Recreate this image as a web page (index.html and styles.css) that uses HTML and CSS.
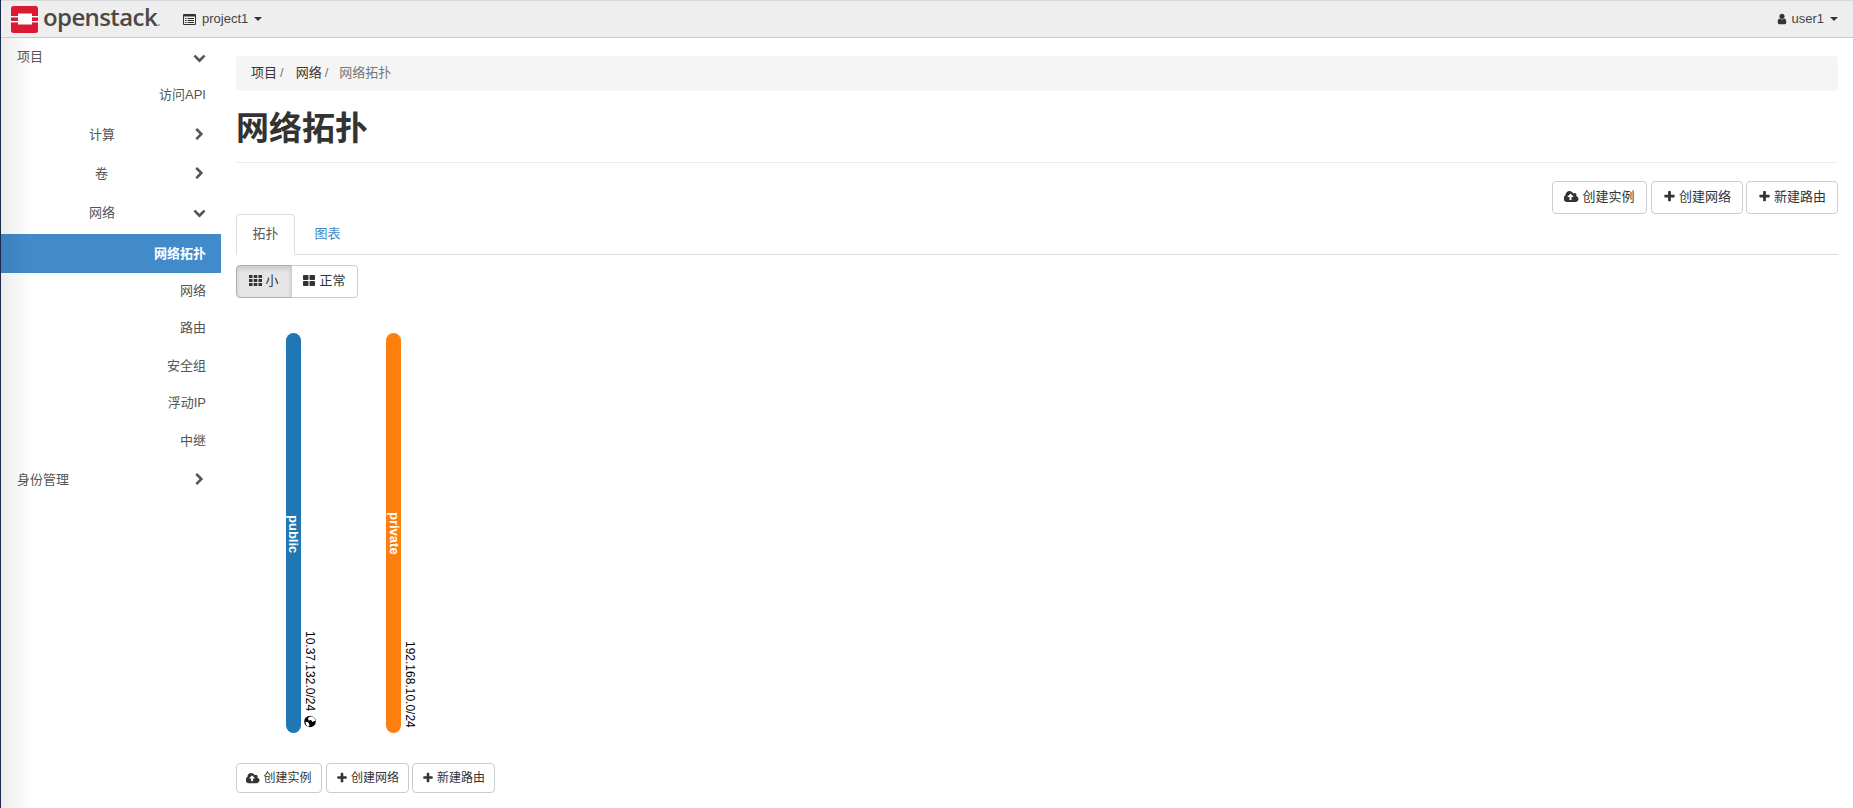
FILE: index.html
```html
<!DOCTYPE html>
<html lang="zh">
<head>
<meta charset="utf-8">
<title>网络拓扑</title>
<link rel="stylesheet" href="styles.css">
</head>
<body>
<svg class="defs" width="0" height="0" aria-hidden="true">
  <defs>
    <symbol id="i-down" viewBox="0 0 1792 1792"><path d="M1683 808l-742 741q-19 19-45 19t-45-19l-742-741q-19-19-19-45.500t19-45.500l166-165q19-19 45-19t45 19l531 531 531-531q19-19 45-19t45 19l166 165q19 19 19 45.500t-19 45.500z"/></symbol>
    <symbol id="i-right" viewBox="0 0 1792 1792"><path d="M1363 877l-742 742q-19 19-45 19t-45-19l-166-166q-19-19-19-45t19-45l531-531-531-531q-19-19-19-45t19-45l166-166q19-19 45-19t45 19l742 742q19 19 19 45t-19 45z"/></symbol>
    <symbol id="i-plus" viewBox="0 0 1792 1792"><path d="M1600 736v192q0 40-28 68t-68 28h-416v416q0 40-28 68t-68 28h-192q-40 0-68-28t-28-68v-416h-416q-40 0-68-28t-28-68v-192q0-40 28-68t68-28h416v-416q0-40 28-68t68-28h192q40 0 68 28t28 68v416h416q40 0 68 28t28 68z"/></symbol>
    <symbol id="i-cloud" viewBox="0 0 1920 1792"><path d="M1216 864q0-14-9-23l-352-352q-9-9-23-9t-23 9l-351 351q-10 12-10 24 0 14 9 23t23 9h224v352q0 13 9.500 22.500t22.500 9.500h192q13 0 22.500-9.500t9.500-22.500v-352h224q13 0 22.500-9.500t9.500-22.500zm640 288q0 159-112.500 271.500t-271.500 112.500h-1088q-185 0-316.500-131.500t-131.500-316.500q0-130 70-240t188-165q-2-30-2-43 0-212 150-362t362-150q156 0 285.500 87t188.500 231q71-62 166-62 106 0 181 75t75 181q0 76-41 138 130 31 213.500 135.500t83.500 238.500z"/></symbol>
    <symbol id="i-user" viewBox="0 0 1792 1792"><path d="M1536 1399q0 109-62.500 187t-150.500 78h-854q-88 0-150.500-78t-62.500-187q0-85 8.500-160.500t31.500-152 58.500-131 94-89 134.500-34.500q131 128 313 128t313-128q76 0 134.500 34.500t94 89 58.500 131 31.500 152 8.500 160.500zm-256-887q0 159-112.500 271.500t-271.500 112.500-271.500-112.500-112.500-271.500 112.500-271.500 271.500-112.500 271.500 112.500 112.500 271.500z"/></symbol>
    <symbol id="i-th" viewBox="0 0 13 11"><path d="M0 0h3.500v3H0zM4.700 0h3.600v3H4.700zM9.500 0H13v3H9.500zM0 4h3.500v3H0zM4.700 4h3.600v3H4.700zM9.500 4H13v3H9.500zM0 8h3.500v3H0zM4.700 8h3.600v3H4.700zM9.500 8H13v3H9.500z"/></symbol>
    <symbol id="i-large" viewBox="0 0 12 11"><rect width="5.500" height="5" rx=".8"/><rect x="6.500" width="5.500" height="5" rx=".8"/><rect y="6" width="5.500" height="5" rx=".8"/><rect x="6.500" y="6" width="5.500" height="5" rx=".8"/></symbol>
  </defs>
</svg>

<header class="navbar">
  <div class="brand">
    <svg class="logo" viewBox="0 0 27 27" aria-hidden="true">
      <rect width="27" height="27" rx="2.500" fill="#da1a32"/>
      <rect x="7" y="7.500" width="14" height="11" fill="#fff"/>
      <rect x="0" y="10" width="7" height="1.400" fill="#fff"/>
      <rect x="0" y="15" width="7" height="1.400" fill="#fff"/>
      <rect x="21" y="10" width="6" height="1.400" fill="#fff"/>
      <rect x="21" y="15" width="6" height="1.400" fill="#fff"/>
    </svg>
    <span class="brand-name">openstack<small>.</small></span>
  </div>
  <div class="project">
    <svg class="project-icon" viewBox="0 0 13 11" aria-hidden="true">
      <path fill-rule="evenodd" d="M1 0h11a1 1 0 0 1 1 1v9a1 1 0 0 1-1 1H1a1 1 0 0 1-1-1V1a1 1 0 0 1 1-1zM1 2.500V10h11V2.500zM2 4h1.500v1H2zM4.500 4H11v1H4.500zM2 6h1.500v1H2zM4.500 6H11v1H4.500zM2 8h1.500v1H2zM4.500 8H11v1H4.500z"/>
    </svg>
    <span>project1</span>
    <i class="caret"></i>
  </div>
  <div class="user">
    <svg class="user-icon"><use href="#i-user"/></svg>
    <span>user1</span>
    <i class="caret"></i>
  </div>
</header>

<div class="shell">
  <nav class="sidebar">
    <div class="nav-top"><span>项目</span><svg class="chev-d"><use href="#i-down"/></svg></div>
    <div class="nav-sub first">访问API</div>
    <div class="nav-group"><span>计算</span><svg class="chev-r"><use href="#i-right"/></svg></div>
    <div class="nav-group"><span class="single">卷</span><svg class="chev-r"><use href="#i-right"/></svg></div>
    <div class="nav-group"><span>网络</span><svg class="chev-d"><use href="#i-down"/></svg></div>
    <div class="nav-sub active">网络拓扑</div>
    <div class="nav-sub">网络</div>
    <div class="nav-sub">路由</div>
    <div class="nav-sub">安全组</div>
    <div class="nav-sub">浮动IP</div>
    <div class="nav-sub">中继</div>
    <div class="nav-top"><span>身份管理</span><svg class="chev-r"><use href="#i-right"/></svg></div>
  </nav>

  <main class="content">
    <div class="breadcrumb">
      <span>项目</span><span class="sep">/</span><span>网络</span><span class="sep">/</span><span class="current">网络拓扑</span>
    </div>
    <h1 class="title">网络拓扑</h1>

    <div class="actions">
      <button class="btn"><svg class="ic-cloud"><use href="#i-cloud"/></svg>创建实例</button>
      <button class="btn"><svg class="ic-plus"><use href="#i-plus"/></svg>创建网络</button>
      <button class="btn"><svg class="ic-plus"><use href="#i-plus"/></svg>新建路由</button>
    </div>

    <div class="tabs">
      <div class="tab active">拓扑</div>
      <div class="tab link">图表</div>
    </div>

    <div class="btn-group">
      <button class="btn seg pressed"><svg class="ic-th"><use href="#i-th"/></svg>小</button>
      <button class="btn seg"><svg class="ic-large"><use href="#i-large"/></svg>正常</button>
    </div>

    <svg class="topology" viewBox="0 0 400 402" aria-label="network topology">
      <rect x="50" y="1" width="15" height="400" rx="7.500" fill="#1f77b4"/>
      <text class="net-name" transform="translate(53 183) rotate(90)">public</text>
      <text class="net-cidr" transform="translate(70 299) rotate(90)">10.37.132.0/24</text>
      <circle cx="74" cy="389.500" r="5.800" fill="#000"/>
      <path d="M72 386q3-2.500 6-.5l1.500 3-3 1.500-1.500-2-2.500.5zM69.500 389.500l3 1 1 3-1.500 1.500-2-2.500z" fill="#fff"/>
      <rect x="150" y="1" width="15" height="400" rx="7.500" fill="#ff7f0e"/>
      <text class="net-name" transform="translate(153.500 180) rotate(90)">private</text>
      <text class="net-cidr" transform="translate(170 309) rotate(90)">192.168.10.0/24</text>
    </svg>

    <div class="actions-bottom">
      <button class="btn small"><svg class="ic-cloud"><use href="#i-cloud"/></svg>创建实例</button>
      <button class="btn small"><svg class="ic-plus"><use href="#i-plus"/></svg>创建网络</button>
      <button class="btn small"><svg class="ic-plus"><use href="#i-plus"/></svg>新建路由</button>
    </div>
  </main>
</div>
</body>
</html>
```
FILE: styles.css
```css
* { box-sizing: border-box; }
html, body { height: 100%; }
body {
  margin: 0;
  height: 808px;
  overflow: hidden;
  background: #fff;
  border-left: 1px solid #1b2a4a;
  font-family: "Liberation Sans", "Noto Sans CJK SC", sans-serif;
  font-size: 13px;
  line-height: 18px;
  color: #333;
}
.defs { position: absolute; }

/* navbar */
.navbar {
  height: 38px;
  display: flex;
  align-items: center;
  background: #eee;
  border-top: 1px solid #d8d8d8;
  border-bottom: 1px solid #c9c9c9;
  padding-right: 15px;
}
.brand { display: flex; align-items: center; width: 182px; padding-left: 10px; }
.logo { width: 27px; height: 27px; flex: none; }
.brand-name {
  margin-left: 5px;
  font-family: "Open Sans", sans-serif;
  font-size: 24px;
  font-weight: 600;
  letter-spacing: -0.6px;
  line-height: 27px;
  color: #4e4843;
}
.brand-name small { font-size: 12px; color: #888; }
.project, .user { display: flex; align-items: center; color: #444; }
.project-icon { width: 13px; height: 11px; margin-right: 6px; fill: #333; }
.user { margin-left: auto; }
.user-icon { width: 12px; height: 12px; margin-right: 3px; fill: #333; }
.caret {
  width: 0; height: 0; margin-left: 6px;
  border-top: 4px solid #333;
  border-left: 4px solid transparent;
  border-right: 4px solid transparent;
}

/* layout */
.shell { display: flex; }
.sidebar {
  position: relative;
  width: 220px;
  flex: none;
  height: 770px;
  color: #555;
}
.sidebar::before {
  content: "";
  position: absolute;
  inset: 0 auto 0 0;
  width: 32px;
  background: linear-gradient(to right, rgba(0,0,0,.075), rgba(0,0,0,0));
  z-index: 1;
  pointer-events: none;
}
.nav-top, .nav-group, .nav-sub { display: flex; align-items: center; }
.nav-top { height: 39px; padding: 0 15px 1px 16px; justify-content: space-between; }
.nav-group { height: 39px; padding-right: 15px; justify-content: flex-end; }
.nav-group span { width: 104px; flex: none; }
.nav-group .single { padding-left: 6px; }
.nav-sub { height: 37.500px; padding: 0 15px 2px 0; justify-content: flex-end; }
.nav-sub.first { height: 38px; }
.nav-sub.active {
  height: 39px;
  margin-top: 2px;
  padding-bottom: 0;
  background: #428bca;
  color: #fff;
  font-weight: 700;
}
.chev-d, .chev-r { width: 13px; height: 13px; fill: #555; flex: none; }

/* content */
.content { flex: 1; padding: 18px 15px 0 15px; min-width: 0; }
.breadcrumb {
  height: 35px;
  display: flex;
  align-items: center;
  padding: 0 15px 1px;
  background: #f5f5f5;
  border-radius: 4px;
  color: #333;
}
.sep { padding-left: 3px; margin-right: 12px; color: #777; }
.current { color: #777; margin-left: -1px; }
.title {
  margin: 19px 0 0;
  height: 53px;
  font-size: 33px;
  line-height: 38px;
  font-weight: 700;
  color: #333;
  border-bottom: 1px solid #eee;
}
.actions { margin-top: 18px; display: flex; justify-content: flex-end; gap: 3px; }
.btn {
  display: inline-flex;
  align-items: center;
  justify-content: center;
  height: 33px;
  padding: 0 0 2px;
  font: inherit;
  color: #333;
  background: #fff;
  border: 1px solid #ccc;
  border-radius: 4px;
}
.ic-cloud { width: 15px; height: 14px; margin-right: 3px; fill: #333; flex: none; }
.ic-plus { width: 13px; height: 13px; margin-right: 3px; fill: #333; flex: none; }
.actions .btn { width: 92px; }
.actions .btn:first-child { width: 95px; margin-right: 1px; }

.tabs { display: flex; height: 41px; border-bottom: 1px solid #ddd; }
.tab { width: 59px; height: 41px; padding-bottom: 2px; display: flex; align-items: center; justify-content: center; }
.tab.active {
  background: #fff;
  color: #555;
  border: 1px solid #ddd;
  border-bottom-color: #fff;
  border-radius: 4px 4px 0 0;
}
.tab.link { width: 65px; color: #428bca; }

.btn-group { display: flex; margin-top: 10px; }
.seg:first-child { width: 56px; border-radius: 4px 0 0 4px; }
.seg:last-child { width: 67px; margin-left: -1px; border-radius: 0 4px 4px 0; }
.pressed {
  background: #e6e6e6;
  border-color: #adadad;
  box-shadow: inset 0 3px 5px rgba(0,0,0,.125);
}
.ic-th { width: 13px; height: 11px; margin-right: 3px; fill: #333; }
.ic-large { width: 12px; height: 11px; margin-right: 4px; fill: #333; }

.topology { display: block; width: 400px; height: 402px; margin-top: 34px; }
.net-name { font-size: 13px; font-weight: 700; fill: #fff; }
.net-cidr { font-size: 12px; fill: #000; }

.actions-bottom { display: flex; gap: 3px; margin-top: 29px; }
.btn.small { height: 30px; width: 83px; padding: 0; font-size: 12px; line-height: 16px; }
.btn.small:first-child { width: 86px; margin-right: 1px; }
.btn.small .ic-cloud { width: 14px; height: 13px; }
.btn.small .ic-plus { width: 12px; height: 12px; }
```
